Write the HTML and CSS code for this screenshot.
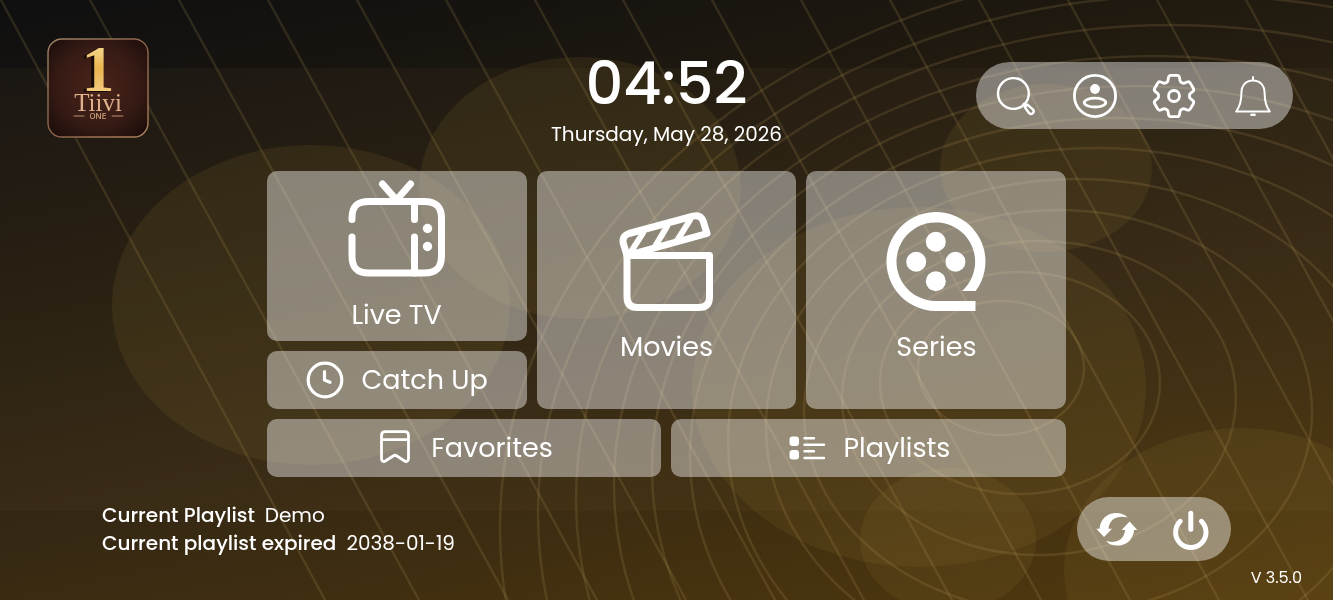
FILE: index.html
```html
<!DOCTYPE html>
<html lang="en">
<head>
  <meta charset="UTF-8" />
  <meta name="viewport" content="width=device-width, initial-scale=1.0" />
  <title>Tiivi One</title>
  <link rel="stylesheet" href="styles.css">
</head>
<body>
  <!-- Background shapes -->
  <svg class="backdrop" viewBox="0 0 1333 600" preserveAspectRatio="xMidYMid slice" aria-hidden="true">
    <g class="blobs">
      <ellipse cx="311" cy="305" rx="199" ry="160" />
      <ellipse cx="580" cy="188" rx="161" ry="131" />
      <ellipse cx="1046" cy="168" rx="106" ry="84" />
      <ellipse cx="919" cy="387" rx="227" ry="180" />
      <ellipse cx="948" cy="540" rx="88" ry="72" />
      <ellipse cx="1240" cy="570" rx="176" ry="142" />
    </g>
    <g class="rings">
      <ellipse cx="1001" cy="368" rx="83" ry="67" />
      <ellipse cx="1020" cy="383" rx="140" ry="111" />
      <ellipse cx="1039" cy="398" rx="197" ry="157" />
      <ellipse cx="1058" cy="412" rx="254" ry="202" />
      <ellipse cx="1077" cy="427" rx="311" ry="248" />
      <ellipse cx="1096" cy="441" rx="368" ry="293" />
      <ellipse cx="1115" cy="456" rx="425" ry="338" />
      <ellipse cx="1134" cy="470" rx="482" ry="384" />
      <ellipse cx="1153" cy="485" rx="539" ry="429" />
      <ellipse cx="1172" cy="499" rx="596" ry="474" />
      <ellipse cx="1191" cy="514" rx="653" ry="519" />
      <ellipse cx="1210" cy="528" rx="710" ry="564" />
    </g>
    <path class="rays" d="M1 0L325 600M90 0L419 600M179 0L508 600M268 0L597 600M357 0L686 600M446 0L775 600M535 0L864 600M623 0L952 600M712 0L1041 600M801 0L1130 600M890 0L1219 600M979 0L1308 600M1068 0L1397 600M1157 0L1486 600M1246 0L1575 600" />
    <rect class="band" x="0" y="68" width="1333" height="443" />
  </svg>

  <header class="top-bar">
    <svg class="logo" viewBox="0 0 102 100" role="img" aria-label="Tiivi One">
      <defs>
        <radialGradient id="leather" cx="50%" cy="48%" r="70%">
          <stop offset="0" stop-color="#4a241b" />
          <stop offset="0.6" stop-color="#351a14" />
          <stop offset="1" stop-color="#180b08" />
        </radialGradient>
        <linearGradient id="gold" x1="0" y1="0" x2="0" y2="1">
          <stop offset="0" stop-color="#fff0b0" />
          <stop offset="0.5" stop-color="#e9b550" />
          <stop offset="1" stop-color="#f9d795" />
        </linearGradient>
        <linearGradient id="rim" x1="0" y1="0" x2="1" y2="1">
          <stop offset="0" stop-color="#a08468" />
          <stop offset="0.5" stop-color="#8a6248" />
          <stop offset="1" stop-color="#b0835c" />
        </linearGradient>
      </defs>
      <rect x="1" y="1" width="100" height="98" rx="14" fill="url(#leather)" stroke="url(#rim)" stroke-width="1.4" />
      <text class="logo-one" x="51" y="53" fill="url(#gold)">1</text>
      <text class="logo-name" x="51" y="73">Tiivi</text>
      <text class="logo-sub" x="51" y="81">ONE</text>
      <path d="M27 78H37M65 78H76" stroke="#b98f70" />
    </svg>

    <div class="clock">
      <time class="time">04:52</time>
      <time class="date" datetime="2026-05-28">Thursday, May 28, 2026</time>
    </div>

    <nav class="pill pill-top">
      <button class="icon-btn" aria-label="Search">
        <svg viewBox="0 0 48 48" stroke-width="2.4">
          <circle cx="21.4" cy="21.5" r="15.4" />
          <path d="M31.8 31.8l1.8 1.800M32.800 35.200l2.600-2.600 5.400 4.800a2.600 2.600 0 0 1-3.600 3.800z" />
        </svg>
      </button>
      <button class="icon-btn" aria-label="Account">
        <svg viewBox="0 0 48 48" stroke-width="2.8">
          <circle cx="24" cy="24" r="20.6" />
          <circle class="solid" cx="24" cy="17" r="4.9" />
          <ellipse cx="24" cy="30.6" rx="10.8" ry="4.4" />
        </svg>
      </button>
      <button class="icon-btn" aria-label="Settings">
        <svg viewBox="1.5 1.5 21 21" stroke-width="1.25">
          <path d="M9.594 3.94c.09-.542.56-.94 1.11-.94h2.593c.55 0 1.02.398 1.11.94l.213 1.281c.063.374.313.686.645.87.074.04.147.083.22.127.325.196.72.257 1.075.124l1.217-.456a1.125 1.125 0 0 1 1.37.49l1.296 2.247a1.125 1.125 0 0 1-.26 1.431l-1.003.827c-.293.241-.438.613-.43.992a7.723 7.723 0 0 1 0 .255c-.008.378.137.75.43.991l1.004.827c.424.35.534.955.26 1.43l-1.298 2.247a1.125 1.125 0 0 1-1.369.491l-1.217-.456c-.355-.133-.75-.072-1.076.124a6.47 6.47 0 0 1-.22.128c-.331.183-.581.495-.644.869l-.213 1.281c-.09.543-.56.94-1.11.94h-2.594c-.55 0-1.019-.398-1.11-.94l-.213-1.281c-.062-.374-.312-.686-.644-.87a6.52 6.52 0 0 1-.22-.127c-.325-.196-.72-.257-1.076-.124l-1.217.456a1.125 1.125 0 0 1-1.369-.49l-1.297-2.247a1.125 1.125 0 0 1 .26-1.431l1.004-.827c.292-.24.437-.613.43-.991a6.932 6.932 0 0 1 0-.255c.007-.38-.138-.751-.43-.992l-1.004-.827a1.125 1.125 0 0 1-.26-1.43l1.297-2.247a1.125 1.125 0 0 1 1.37-.491l1.216.456c.356.133.751.072 1.076-.124.072-.044.146-.086.22-.128.332-.183.582-.495.644-.869l.214-1.28Z" />
          <circle cx="12" cy="12" r="2.4" />
        </svg>
      </button>
      <button class="icon-btn" aria-label="Notifications">
        <svg viewBox="0 0 48 48" stroke-width="2">
          <path d="M24 5v3.5M24 8.5c-7 0-11.6 5-11.6 12.5 0 8-1.4 13.5-5.2 18.5h33.6c-3.8-5-5.2-10.5-5.2-18.5 0-7.5-4.6-12.5-11.6-12.5z" />
          <path d="M22.5 42.8h3" stroke-width="2.6" />
        </svg>
      </button>
    </nav>
  </header>

  <main class="menu">
    <button class="tile tile-live">
      <svg class="tile-icon" viewBox="0 0 98 98" stroke-width="7">
        <path d="M4 39.5V38C4 26 9 21.5 21 21.5h55c12 0 17.5 5 17.5 17V76c0 12-5.5 17-17.5 17H21C9 93 4 88 4 76V57" />
        <path d="M66.5 21.5v18M66.5 57v36M34.5 4l14 16 14-16" />
        <circle class="solid" cx="79.5" cy="48.5" r="4.7" />
        <circle class="solid" cx="79.5" cy="66.5" r="4.7" />
      </svg>
      Live TV
    </button>

    <button class="tile tile-tall">
      <svg class="tile-icon" viewBox="0 0 98 98" stroke-width="7">
        <path d="M10 43.5h82.5V85c0 7-3.5 10.5-10.5 10.5H20.5C13.5 95.500 10 92 10 85z" />
        <path d="M10 43.500L6.500 32c-1.500-5 .5-9 5.500-10.500L76 4.200c5-1.200 8.500.3 10.300 5.300l3.700 12z" />
        <path d="M26 21L14.500 39M50 14.500L38 34.500M73 8L60.500 28" stroke-width="6" />
      </svg>
      Movies
    </button>

    <button class="tile tile-tall">
      <svg class="tile-icon" viewBox="0 0 98 98">
        <g class="solid">
          <path d="M88.700 79H75A39.300 39.300 0 1 0 48.800 89H88.500V99H48.800A49.500 49.500 0 1 1 88.700 79Z" />
          <circle cx="48.800" cy="29.700" r="10" />
          <circle cx="29.200" cy="49.700" r="10" />
          <circle cx="68.500" cy="49.700" r="10" />
          <circle cx="48.800" cy="69.300" r="10" />
        </g>
      </svg>
      Series
    </button>

    <button class="tile tile-row">
      <svg class="row-icon" viewBox="0 0 40 40" stroke-width="3.2">
        <circle cx="20" cy="20" r="16.8" />
        <path d="M19.500 11.500v8.500l5.500 2.300" />
      </svg>
      Catch Up
    </button>

    <button class="tile tile-row tile-wide">
      <svg class="row-icon" viewBox="0 0 40 40" stroke-width="2.8">
        <path d="M6.500 7.500c0-2.500 1.300-3.800 3.800-3.800h19.400c2.500 0 3.800 1.300 3.800 3.800v23c0 2.800-2 3.800-4.200 2.300L21.500 27.800a2.500 2.500 0 0 0-3 0l-7.800 5c-2.200 1.500-4.200.5-4.200-2.300zM6.500 11.700h27" />
      </svg>
      Favorites
    </button>

    <button class="tile tile-row tile-wide">
      <svg class="row-icon" viewBox="0 0 40 40" stroke-width="2.4">
        <g class="solid">
          <rect x="2.5" y="8.5" width="9.5" height="9.5" rx="3" />
          <rect x="2.5" y="22" width="9.5" height="9.5" rx="3" />
        </g>
        <path d="M17.500 10.300h9.500M17.500 16.700h19.500M17.500 23.300h9.500M17.500 30h19.500" />
      </svg>
      Playlists
    </button>
  </main>

  <footer class="bottom-bar">
    <div class="playlist-info">
      <p><strong>Current Playlist</strong><span>Demo</span></p>
      <p><strong>Current playlist expired</strong><span>2038-01-19</span></p>
    </div>

    <div class="pill pill-bottom">
      <button class="icon-btn icon-btn-small" aria-label="Refresh">
        <svg viewBox="0 0 44 44">
          <g class="solid">
            <path d="M1.300 21.700H4.500C5.500 12 12 6 21.500 6c4.500 0 8.500 1.500 11 4.500C24 8 14.500 11 13.500 21.700H17L9 30z" />
            <path d="M42.300 22.900H39.100C38.100 32.600 31.600 38.600 22.100 38.600c-4.500 0-8.500-1.500-11-4.500 8.500 2.500 18-.5 19-11.200H26.600L34.600 14.600z" />
          </g>
        </svg>
      </button>
      <button class="icon-btn icon-btn-small" aria-label="Power">
        <svg viewBox="0 0 44 44" stroke-width="5">
          <path d="M11.200 14.300a15.200 15.200 0 1 0 21.200 0M21.800 6.300v16" />
        </svg>
      </button>
    </div>
  </footer>

  <p class="version">V 3.5.0</p>
</body>
</html>
```
FILE: styles.css
```css
* {
  box-sizing: border-box;
}

body {
  font-family: Poppins, Inter, sans-serif;
  background: linear-gradient(168deg, #0f0f10 0%, #1f190f 28%, #332714 58%, #412f10 78%, #51390f 100%);
  color: #fff;
  min-height: 100vh;
  margin: 0;
}

p {
  margin: 0;
}

button {
  font: inherit;
  color: inherit;
  border: none;
  cursor: pointer;
}

svg {
  display: block;
  fill: none;
  stroke: #fff;
  stroke-linecap: round;
  stroke-linejoin: round;
}

.solid {
  fill: #fff;
  stroke: none;
}

/* background */
.backdrop {
  position: fixed;
  inset: 0;
  width: 100%;
  height: 100%;
  z-index: -1;
}

.blobs {
  fill: rgba(150, 118, 50, 0.14);
  stroke: none;
}

.rings,
.rays {
  stroke: rgba(190, 160, 95, 0.17);
  stroke-width: 2.5;
}

.band {
  fill: rgba(160, 125, 60, 0.06);
  stroke: none;
}

/* header */
.top-bar {
  display: grid;
  grid-template-columns: 1fr auto 1fr;
  padding: 38px 40px 0;
}

.logo {
  width: 102px;
  height: 100px;
  margin-left: 7px;
  overflow: visible;
}

.logo text {
  font-family: "Liberation Serif", serif;
  text-anchor: middle;
  stroke: none;
}

.logo .logo-one {
  font-size: 66px;
  font-weight: bold;
  filter: drop-shadow(-3px 1px 0 #170a06);
}

.logo .logo-name {
  font-size: 25px;
  fill: #e0b08c;
}

.logo .logo-sub {
  font-family: Inter, sans-serif;
  font-size: 8px;
  font-weight: 500;
  fill: #d0a07c;
}

.clock {
  display: flex;
  flex-direction: column;
  align-items: center;
  padding-top: 16px;
}

.time {
  font-size: 59px;
  font-weight: 500;
  line-height: 60px;
}

.date {
  font-size: 20px;
  line-height: 28px;
  margin-top: 6px;
}

.pill {
  display: flex;
  align-items: center;
  background: rgba(255, 255, 255, 0.42);
  border-radius: 34px;
}

.pill-top {
  justify-self: end;
  align-self: start;
  gap: 31px;
  height: 67px;
  margin-top: 24px;
  padding: 0 16px;
}

.icon-btn {
  width: 48px;
  height: 48px;
  padding: 0;
  background: none;
}

.icon-btn-small {
  width: 44px;
  height: 44px;
}

/* menu tiles */
.menu {
  display: grid;
  grid-template-columns: repeat(6, 1fr);
  grid-template-rows: 170px 58px 58px;
  gap: 10px;
  width: 60%;
  margin: 23px auto 0;
}

.tile {
  display: flex;
  flex-direction: column;
  align-items: center;
  justify-content: center;
  gap: 15px;
  grid-column: span 2;
  padding: 0;
  font-size: 27px;
  line-height: 44px;
  background: rgba(255, 255, 255, 0.42);
  border-radius: 10px;
}

.tile-live {
  padding-top: 4px;
}

.tile-tall {
  grid-row: span 2;
}

.tile-row {
  flex-direction: row;
  gap: 16px;
}

.tile-wide {
  grid-column: span 3;
}

.tile:hover,
.icon-btn:hover {
  opacity: 0.85;
}

.tile-icon {
  width: 98px;
  height: 98px;
  overflow: visible;
}

.row-icon {
  width: 40px;
  height: 40px;
}

/* footer */
.bottom-bar {
  display: flex;
  align-items: center;
  justify-content: space-between;
  margin-top: 20px;
  padding: 0 102px;
}

.playlist-info {
  font-size: 20px;
  line-height: 28px;
}

.playlist-info p {
  display: flex;
  gap: 10px;
}

.playlist-info strong {
  font-weight: 500;
}

.pill-bottom {
  gap: 30px;
  height: 64px;
  padding: 0 18px;
}

.version {
  padding: 7px 31px 0;
  font-size: 16px;
  line-height: 20px;
  text-align: right;
}
```
